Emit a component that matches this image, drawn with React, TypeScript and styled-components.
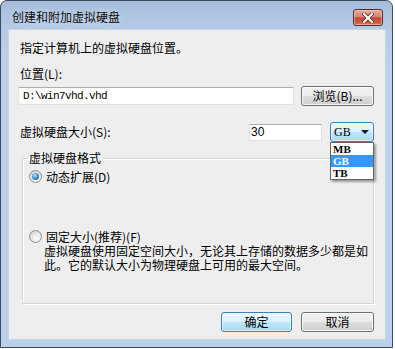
import React from 'react';
import styled, { createGlobalStyle } from 'styled-components';

const Global = createGlobalStyle`
  html, body { margin: 0; padding: 0; background: #ffffff; }
  body {
    font-family: "Noto Sans CJK SC", "Liberation Sans", sans-serif;
    font-size: 12px;
    color: #000;
  }
  * { box-sizing: border-box; }
`;

const Window = styled.div`
  width: 393px;
  height: 348px;
  border: 1px solid #3a4a5c;
  border-radius: 7px 7px 0 0;
  background: linear-gradient(#a6bedb, #b4cbe6 28px, #b9d1ea 60px, #b9d1ea);
  display: flex;
  flex-direction: column;
  padding: 0 6px 7px 7px;
`;

const TitleBar = styled.div`
  height: 28px;
  display: flex;
  align-items: flex-start;
  justify-content: space-between;
  padding: 0 3px 0 4px;
`;

const Title = styled.div`
  margin-top: 8px;
  font-size: 12px;
  line-height: 16px;
  color: #0a0a0a;
  text-shadow: 0 0 6px rgba(255, 255, 255, 0.6);
`;

const CloseButton = styled.div`
  margin-top: 8px;
  width: 30px;
  height: 17px;
  border: 1px solid #5b2a25;
  border-radius: 3px;
  background: linear-gradient(#eaa99b, #d78472 45%, #c24a35 52%, #c85a45 80%, #d77c66);
  box-shadow: inset 0 0 0 1px rgba(255, 220, 210, 0.45);
  display: flex;
  align-items: center;
  justify-content: center;
`;

const Client = styled.div`
  flex: 1;
  background: #eeeeee;
  padding: 11px 11px 0 9px;
  display: flex;
  flex-direction: column;
  border: 1px solid #c5d5e6;
`;

const Text = styled.div<{ $mt?: number }>`
  line-height: 14px;
  padding-left: 2px;
  margin-top: ${(p) => p.$mt ?? 0}px;
  white-space: nowrap;
`;

const Row = styled.div<{ $mt: number }>`
  display: flex;
  align-items: center;
  height: 20px;
  margin-top: ${(p) => p.$mt}px;
`;

const TextBox = styled.div<{ $w?: number; $h: number; $mono?: boolean }>`
  ${(p) => (p.$w ? `width: ${p.$w}px;` : 'flex: 1;')}
  height: ${(p) => p.$h}px;
  background: #fff;
  border: 1px solid #dbdfe6;
  border-top-color: #abadb3;
  border-left-color: #e2e3ea;
  display: flex;
  align-items: center;
  padding-left: ${(p) => (p.$mono ? 4 : 1)}px;
  font-family: ${(p) => (p.$mono ? '"Liberation Mono", monospace' : '"Liberation Sans", sans-serif')};
  font-size: ${(p) => (p.$mono ? 11 : 12)}px;
  letter-spacing: ${(p) => (p.$mono ? -0.6 : 0)}px;
  white-space: nowrap;
`;

const Button = styled.div<{ $w: number; $default?: boolean }>`
  width: ${(p) => p.$w}px;
  height: 20px;
  border: 1px solid ${(p) => (p.$default ? '#3c7fb1' : '#707070')};
  border-radius: 3px;
  background: ${(p) =>
    p.$default
      ? 'linear-gradient(#eaf6fd, #d9f0fc 50%, #bee6fd 50%, #a7d9f5)'
      : 'linear-gradient(#f2f2f2, #ebebeb 50%, #dddddd 50%, #cfcfcf)'};
  box-shadow: inset 0 0 0 1px ${(p) => (p.$default ? 'rgba(255,255,255,0.6)' : 'rgba(255,255,255,0.8)')};
  display: flex;
  align-items: center;
  justify-content: center;
  line-height: 14px;
  white-space: nowrap;
`;

const Spacer = styled.div`
  flex: 1;
`;

const ComboWrap = styled.div`
  position: relative;
  margin-left: 8px;
  width: 44px;
  height: 20px;
`;

const Combo = styled.div`
  width: 100%;
  height: 100%;
  border: 1px solid #3c7fb1;
  border-radius: 3px;
  background: linear-gradient(#eaf6fd, #d9f0fc 50%, #bee6fd 50%, #a7d9f5);
  box-shadow: inset 0 0 0 1px rgba(255, 255, 255, 0.6);
  display: flex;
  align-items: center;
  justify-content: space-between;
  padding: 0 4px 0 3px;
  font-family: "Liberation Serif", serif;
  font-size: 12px;
`;

const Arrow = styled.div`
  width: 0;
  height: 0;
  border-left: 4px solid transparent;
  border-right: 4px solid transparent;
  border-top: 4px solid #1a1a1a;
`;

const DropList = styled.div`
  position: absolute;
  top: 20px;
  left: 0;
  width: 44px;
  background: #fff;
  border: 1px solid #646464;
  box-shadow: 2px 2px 2px rgba(0, 0, 0, 0.35);
  z-index: 2;
`;

const DropItem = styled.div<{ $sel?: boolean }>`
  height: 12px;
  line-height: 12px;
  padding-left: 2px;
  font-family: "Liberation Serif", serif;
  font-size: 11px;
  font-weight: 600;
  overflow: hidden;
  background: ${(p) => (p.$sel ? '#3399ff' : '#fff')};
  color: ${(p) => (p.$sel ? '#fff' : '#000')};
`;

const Group = styled.fieldset`
  margin: 9px 0 0 4px;
  padding: 0 0 31px 6px;
  height: 153px;
  border: 1px solid #d5d5d5;
  box-shadow: inset 1px 1px 0 #ffffff, 1px 1px 0 #ffffff;
  min-width: 0;
`;

const Legend = styled.legend`
  margin-left: -2px;
  padding: 0 2px;
  line-height: 14px;
`;

const RadioRow = styled.div<{ $mt: number }>`
  display: flex;
  align-items: center;
  gap: 4px;
  height: 14px;
  margin-top: ${(p) => p.$mt}px;
  white-space: nowrap;
`;

const RadioCircle = styled.div<{ $on?: boolean }>`
  width: 13px;
  height: 13px;
  border-radius: 50%;
  border: 1px solid #8e8f8f;
  background: radial-gradient(circle at 60% 65%, #ffffff, #e0e0e0 60%, #c8c8c8);
  display: flex;
  align-items: center;
  justify-content: center;
  &::after {
    content: '';
    display: ${(p) => (p.$on ? 'block' : 'none')};
    width: 7px;
    height: 7px;
    border-radius: 50%;
    background: radial-gradient(circle at 40% 35%, #bfe9ff, #3d95d8 45%, #0b4e95);
  }
`;

const Desc = styled.div`
  margin: 1px 0 0 15px;
  display: flex;
  flex-direction: column;
`;

const DescLine = styled.div`
  height: 14px;
  line-height: 14px;
  white-space: nowrap;
`;

const Buttons = styled.div`
  display: flex;
  justify-content: flex-end;
  gap: 9px;
  margin-top: 8px;
`;

export default function App() {
  return (
    <>
      <Global />
      <Window>
        <TitleBar>
          <Title>创建和附加虚拟硬盘</Title>
          <CloseButton>
            <svg width="12" height="10" viewBox="0 0 12 10">
              <path d="M2 1 L10 9 M10 1 L2 9" stroke="#5a2a22" strokeWidth="3.6" strokeLinecap="square" />
              <path d="M2 1 L10 9 M10 1 L2 9" stroke="#ffffff" strokeWidth="2" strokeLinecap="square" />
            </svg>
          </CloseButton>
        </TitleBar>
        <Client>
          <Text>指定计算机上的虚拟硬盘位置。</Text>
          <Text $mt={12}>位置(L):</Text>
          <Row $mt={5}>
            <TextBox $h={18} $mono>D:\win7vhd.vhd</TextBox>
            <Button $w={73} style={{ marginLeft: 7 }}>浏览(B)...</Button>
          </Row>
          <Row $mt={16}>
            <Text>虚拟硬盘大小(S):</Text>
            <Spacer />
            <TextBox $w={73} $h={17}>30</TextBox>
            <ComboWrap>
              <Combo>
                <span>GB</span>
                <Arrow />
              </Combo>
              <DropList>
                <DropItem>MB</DropItem>
                <DropItem $sel>GB</DropItem>
                <DropItem>TB</DropItem>
              </DropList>
            </ComboWrap>
          </Row>
          <Group>
            <Legend>虚拟硬盘格式</Legend>
            <RadioRow $mt={4}>
              <RadioCircle $on />
              <span>动态扩展(D)</span>
            </RadioRow>
            <RadioRow $mt={46}>
              <RadioCircle />
              <span>固定大小(推荐)(F)</span>
            </RadioRow>
            <Desc>
              <DescLine>虚拟硬盘使用固定空间大小，无论其上存储的数据多少都是如</DescLine>
              <DescLine>此。它的默认大小为物理硬盘上可用的最大空间。</DescLine>
            </Desc>
          </Group>
          <Buttons>
            <Button $w={71} $default>确定</Button>
            <Button $w={73}>取消</Button>
          </Buttons>
        </Client>
      </Window>
    </>
  );
}
